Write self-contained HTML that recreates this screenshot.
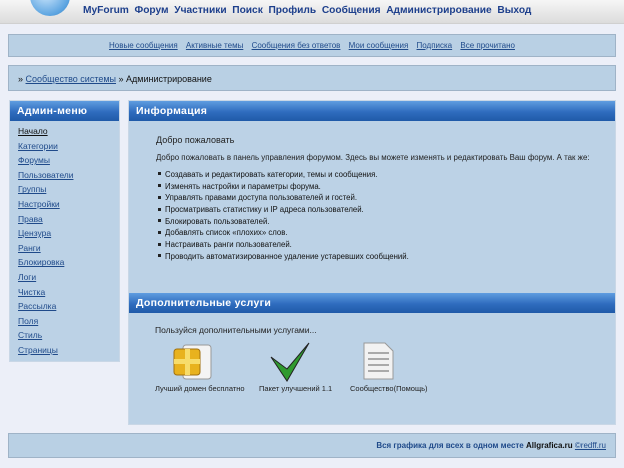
<!DOCTYPE html>
<html><head><meta charset="utf-8"><style>
*{margin:0;padding:0;box-sizing:border-box}
body{width:624px;height:468px;background:#eceff8;font-family:"Liberation Sans","DejaVu Sans",sans-serif;position:relative;overflow:hidden;color:#111}
.abs{position:absolute}
#top{left:0;top:0;width:624px;height:24px;background:linear-gradient(#f6f6f6,#e6e6e6 60%,#dcdcdc);border-bottom:1px solid #d0d0d0}
#globe{left:30px;top:-24px;width:40px;height:40px;border-radius:50%;background:radial-gradient(circle at 40% 40%,#d6ecff,#5aa3e0 70%,#2f6fb0)}
#nav{left:83px;top:5px;font-size:10.2px;font-weight:bold;color:#1d3f8c;white-space:nowrap}
.bar{background:#b9d0e4;border:1px solid #9fb3c7}
#bar1{left:8px;top:34px;width:608px;height:23px;text-align:center;font-size:8px;line-height:22px}
#bar1 a{color:#1f4a8a;text-decoration:underline;margin:0 3px}
#bar2{left:8px;top:65px;width:608px;height:26px;font-size:9px;line-height:26px;padding-left:9px}
#bar2 a{color:#1f4a8a}
.panel{background:#bcd2e6;border:1px solid #c9d7e6}
.hdr{height:20px;background:linear-gradient(#5f9de0,#2f6cbe 55%,#1f5aa8);color:#fff;font-size:10.5px;font-weight:bold;line-height:20px;padding-left:7px;letter-spacing:.3px}
#side{left:9px;top:100px;width:111px;height:262px}
#side ul{list-style:none;padding:3px 0 0 8px}
#side li{font-size:8.5px;line-height:14.6px;height:14.6px}
#side li a{color:#1f4a8a;text-decoration:underline}
#main{left:128px;top:100px;width:488px;height:325px}
.c{font-size:8px;color:#222}
ul.b{list-style:none;font-size:7.8px}
ul.b li{height:11.7px;line-height:11.7px;white-space:nowrap}
ul.b li span{display:inline-block;width:3px;height:3px;background:#222;margin:0 4px 2px 2px;vertical-align:middle}
#foot{left:8px;top:433px;width:608px;height:25px;font-size:8px;line-height:24px;text-align:right;padding-right:9px;color:#1f4a8a;font-weight:bold}
</style></head><body>
<div id="top" class="abs"></div>
<div id="globe" class="abs"></div>
<div id="nav" class="abs">MyForum&nbsp; Форум&nbsp; Участники&nbsp; Поиск&nbsp; Профиль&nbsp; Сообщения&nbsp; Администрирование&nbsp; Выход</div>

<div id="bar1" class="abs bar"><a>Новые сообщения</a> <a>Активные темы</a> <a>Сообщения без ответов</a> <a>Мои сообщения</a> <a>Подписка</a> <a>Все прочитано</a></div>
<div id="bar2" class="abs bar">» <a style="text-decoration:underline">Сообщество системы</a> » Администрирование</div>

<div id="side" class="abs panel">
<div class="hdr">Админ-меню</div>
<ul>
<li><a style="color:#111">Начало</a></li><li><a>Категории</a></li><li><a>Форумы</a></li><li><a>Пользователи</a></li><li><a>Группы</a></li><li><a>Настройки</a></li><li><a>Права</a></li><li><a>Цензура</a></li><li><a>Ранги</a></li><li><a>Блокировка</a></li><li><a>Логи</a></li><li><a>Чистка</a></li><li><a>Рассылка</a></li><li><a>Поля</a></li><li><a>Стиль</a></li><li><a>Страницы</a></li>
</ul>
</div>

<div id="main" class="abs panel">
<div class="hdr">Информация</div>
<div class="abs c" style="left:27px;top:34px;font-size:9px">Добро пожаловать</div>
<div class="abs c" style="left:27px;top:52px;font-size:7.9px;white-space:nowrap">Добро пожаловать в панель управления форумом. Здесь вы можете изменять и редактировать Ваш форум. А так же:</div>
<ul class="abs b" style="left:27px;top:68px">
<li><span></span>Создавать и редактировать категории, темы и сообщения.</li>
<li><span></span>Изменять настройки и параметры форума.</li>
<li><span></span>Управлять правами доступа пользователей и гостей.</li>
<li><span></span>Просматривать статистику и IP адреса пользователей.</li>
<li><span></span>Блокировать пользователей.</li>
<li><span></span>Добавлять список «плохих» слов.</li>
<li><span></span>Настраивать ранги пользователей.</li>
<li><span></span>Проводить автоматизированное удаление устаревших сообщений.</li>
</ul>
<div class="abs hdr" style="left:0;top:192px;width:486px">Дополнительные услуги</div>
<div class="abs c" style="left:26px;top:224px;font-size:8.5px">Пользуйся дополнительными услугами...</div>
<svg class="abs" style="left:42px;top:240px" width="44" height="40"><rect x="12" y="4" width="28" height="34" rx="3" fill="#f4f4f4" stroke="#999"/><rect x="3" y="8" width="26" height="26" rx="3" fill="#e8b21e" stroke="#a07010"/><rect x="14" y="8" width="5" height="26" fill="#f7dc6a"/><rect x="3" y="18" width="26" height="5" fill="#f7dc6a"/></svg>
<svg class="abs" style="left:140px;top:240px" width="44" height="42"><path d="M2 16 L18 40 L40 2 L18 28 Z" fill="#2f9a2f" stroke="#222" stroke-width="1"/></svg>
<svg class="abs" style="left:232px;top:240px" width="36" height="40"><path d="M3 2 H24 L32 10 V38 H3 Z" fill="#f2f2f2" stroke="#999"/><g stroke="#aaa" stroke-width="2"><line x1="7" y1="12" x2="28" y2="12"/><line x1="7" y1="18" x2="28" y2="18"/><line x1="7" y1="24" x2="28" y2="24"/><line x1="7" y1="30" x2="28" y2="30"/></g></svg>
<div class="abs c" style="left:26px;top:283px;font-size:7.5px">Лучший домен бесплатно</div>
<div class="abs c" style="left:130px;top:283px;font-size:7.5px">Пакет улучшений 1.1</div>
<div class="abs c" style="left:221px;top:283px;font-size:7.5px">Сообщество(Помощь)</div>
</div>

<div id="foot" class="abs bar">Вся графика для всех в одном месте <span style="color:#111">Allgrafica.ru</span> <span style="font-weight:normal;text-decoration:underline">©redff.ru</span></div>
</body></html>
